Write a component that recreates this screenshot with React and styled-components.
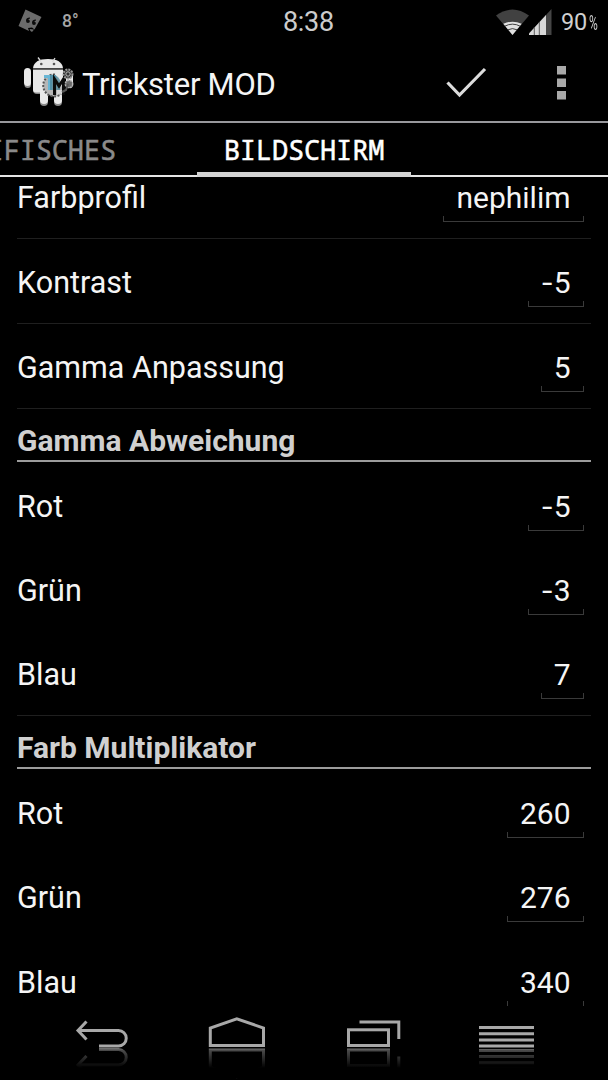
import styled, { createGlobalStyle } from "styled-components";

const Colors = {
  background: "#000000",
  text: "#f5f5f5",
  muted: "#d0d0d0",
  inactive: "#8a8a8a",
  icon: "#a8a8a8",
  divider: "#1f1f1f",
  bracket: "#3a3a3a",
};

const GlobalStyle = createGlobalStyle`
  body {
    margin: 0;
    background: ${Colors.background};
  }

  svg {
    display: block;
    flex: none;
  }
`;

const Screen = styled.div`
  display: flex;
  flex-direction: column;
  width: 608px;
  height: 1080px;
  overflow: hidden;
  background: ${Colors.background};
  color: ${Colors.text};
  font-family: Roboto, "Noto Sans", sans-serif;
`;

/* status bar */

const StatusBar = styled.header`
  display: grid;
  grid-template-columns: 283px 1fr 112px;
  height: 44px;
  flex: none;
`;

const Notifications = styled.div`
  display: flex;
  align-items: center;
  gap: 20px;
  padding-left: 18px;
  padding-bottom: 3px;
`;

const Temperature = styled.span`
  font-size: 17.5px;
  font-weight: 500;
  color: #a6a6a6;
`;

const Clock = styled.span`
  font-size: 27px;
  line-height: 44px;
  font-weight: 400;
  letter-spacing: -0.3px;
  color: #cccccc;
`;

const SystemIcons = styled.div`
  display: flex;
  align-items: center;
  color: #cfcfcf;
`;

const Battery = styled.span`
  margin-left: 8px;
  font-size: 23.5px;
  font-weight: 400;
  line-height: 44px;
  letter-spacing: -0.3px;
  white-space: nowrap;
`;

const Percent = styled.span`
  display: inline-block;
  margin-left: 2px;
  font-size: 20px;
  transform: scaleX(0.6);
  transform-origin: left center;
`;

/* action bar */

const ActionBar = styled.div`
  display: flex;
  align-items: center;
  height: 77px;
  flex: none;
  padding-left: 22px;
  border-bottom: 2px solid #98989c;
`;

const Title = styled.h1`
  flex: 1;
  margin: 4px 0 0 4px;
  font-size: 31px;
  font-weight: 400;
  line-height: 40px;
  letter-spacing: -0.25px;
`;

const ActionButton = styled.button`
  display: flex;
  justify-content: center;
  width: ${(props) => props.$width}px;
  padding: 0;
  border: 0;
  background: transparent;
`;

/* tabs */

const Tabs = styled.nav`
  display: flex;
  height: 52px;
  flex: none;
  border-bottom: 2px solid #e4e4e4;
`;

const Tab = styled.div`
  position: relative;
  display: flex;
  justify-content: ${(props) => (props.$active ? "center" : "flex-end")};
  width: ${(props) => props.$width}px;
  box-sizing: border-box;
  padding-right: ${(props) => (props.$active ? 0 : 81)}px;
  overflow: ${(props) => (props.$active ? "visible" : "hidden")};
  font-family: "Noto Sans Mono", "DejaVu Sans Mono", monospace;
  font-size: 27px;
  line-height: 53px;
  letter-spacing: -0.15px;
  color: ${(props) => (props.$active ? "#ffffff" : Colors.inactive)};
  -webkit-text-stroke: ${(props) =>
    props.$active ? "0.5px #ffffff" : `0.5px ${Colors.inactive}`};

  &::after {
    content: "";
    display: ${(props) => (props.$active ? "block" : "none")};
    position: absolute;
    left: 0;
    right: 0;
    bottom: -2px;
    height: 5px;
    background: #d4d4d4;
  }
`;

/* settings */

const Content = styled.main`
  display: flex;
  flex-direction: column;
  height: 829px;
  flex: none;
  overflow: hidden;
  padding: 0 17px;
`;

const Row = styled.div`
  display: flex;
  justify-content: space-between;
  align-items: flex-end;
  height: ${(props) => props.$height}px;
  flex: none;
  box-sizing: border-box;
  border-bottom: ${(props) =>
    props.$divided ? `1px solid ${Colors.divider}` : "0"};
`;

const Label = styled.span`
  margin-bottom: 21px;
  font-size: 30.5px;
  line-height: 38px;
  letter-spacing: 0;
`;

const Value = styled.span`
  position: relative;
  margin: 0 7px 16px 0;
  padding: 0 13.5px 7px 13px;
  font-size: 30px;
  line-height: 34px;

  &::after {
    content: "";
    position: absolute;
    left: 0;
    right: 0;
    bottom: 0;
    height: 5px;
    border: 1px solid ${Colors.bracket};
    border-top: 0;
  }
`;

const Sign = styled.span`
  display: inline-block;
  width: 13px;
  transform: translateX(1px) scaleX(1.25);
  transform-origin: left center;
`;

const SectionHeader = styled.h2`
  height: ${(props) => props.$height}px;
  flex: none;
  box-sizing: border-box;
  margin: 0;
  padding-top: 13px;
  border-bottom: 2px solid #9c9c9c;
  font-size: 30px;
  font-weight: 700;
  line-height: 38px;
  color: ${Colors.muted};
`;

/* navigation bar */

const NavBar = styled.footer`
  display: grid;
  grid-template-columns: repeat(4, 135px);
  justify-content: center;
  height: 74px;
  flex: none;
`;

const NavButton = styled.button`
  padding: 0;
  border: 0;
  background: transparent;
  color: ${Colors.icon};
`;

const rows = [
  { label: "Farbprofil", value: "nephilim", height: 62, divided: true },
  { label: "Kontrast", value: "-5", height: 85, divided: true },
  { label: "Gamma Anpassung", value: "5", height: 85, divided: true },
  { header: "Gamma Abweichung", height: 53 },
  { label: "Rot", value: "-5", height: 85 },
  { label: "Grün", value: "-3", height: 84 },
  { label: "Blau", value: "7", height: 85, divided: true },
  { header: "Farb Multiplikator", height: 53 },
  { label: "Rot", value: "260", height: 85 },
  { label: "Grün", value: "276", height: 84 },
  { label: "Blau", value: "340", height: 85 },
];

const NoteIcon = () => (
  <svg width="24" height="26" viewBox="18 8 24 26">
    <path d="M25.5 9.5 41.5 17 34.5 29.5 32 27.5 28 28 29 31 18.5 26Z" fill="#6b6b6b" />
    <path
      d="M30 17.5q-4 0-4 3.200q0 2.300 2 2.300q1.900 0 1.900-1.900q0-1.300-1.500-1.400q.2-.9 1.600-1.100zM36 19.500q-4 0-4 3.200q0 2.300 2 2.300q1.900 0 1.900-1.900q0-1.300-1.500-1.400q.2-.9 1.600-1.100z"
      fill="#0c0c0c"
    />
    <path d="M29.500 29l4.500.5-2 2.500-1.500-1z" fill="#6b6b6b" />
  </svg>
);

const WifiIcon = () => (
  <svg width="33" height="44" viewBox="496 0 33 44">
    <path d="M496 14.500Q512.500 2.500 529 14.500L512.500 34Z" fill="#414141" />
    <path d="M503.300 22.800Q512.500 18.500 521.700 22.800L512.500 34Z" fill="#e0e0e0" />
    <path
      d="M504.500 25.300q8-4.300 16 0M508 28.800q4.500-2.400 9 0"
      fill="none"
      stroke="#151515"
      strokeWidth="0.8"
    />
  </svg>
);

const SignalIcon = () => (
  <svg width="24" height="44" viewBox="528 0 24 44">
    <path d="M526.500 34 550.500 8V34Z" fill="#454545" />
    <path d="M526.500 34 545 14V34Z" fill="#d8d8d8" />
    <path d="M533.300 26v8M538.300 21v13" stroke="#5c5c5c" strokeWidth="1" />
  </svg>
);

const AppIcon = () => (
  <svg width="56" height="56" viewBox="22 56 56 56">
    <g fill="#8b8b8b">
      <rect x="24.500" y="72" width="6.500" height="17" rx="3.200" />
      <rect x="40" y="90" width="8" height="17" rx="4" />
      <rect x="54" y="90" width="8" height="17" rx="4" />
      <path d="M33 74h30v17q0 4-4 4H37q-4 0-4-4z" />
    </g>
    <g fill="#e9e9e9">
      <rect x="24" y="69" width="7" height="18" rx="3.500" />
      <rect x="66" y="74" width="7" height="15" rx="3.500" />
      <rect x="40" y="88" width="8" height="17" rx="4" />
      <rect x="54" y="88" width="8" height="17" rx="4" />
      <path d="M33 70.500h30v20q0 3-3 3H36q-3 0-3-3z" />
      <path d="M33 69.300q1-9.300 15-9.300t15 9.300z" />
    </g>
    <path d="m38 58.500 3 4M55 59l-2.500 4" stroke="#d8d8d8" strokeWidth="1.300" />
    <path d="M33 70h30" stroke="#555" strokeWidth="1" />
    <circle cx="41.300" cy="65" r="1.300" fill="#555" />
    <circle cx="54" cy="65" r="1.300" fill="#555" />
    <path d="M55 75.500a11 11 0 1 0 9 16" fill="#b6b6b6" stroke="#555" strokeWidth="2" strokeDasharray="2 1.500" />
    <path d="M44 76h12v3h-4v12h-4V79h-4z" fill="#69b6d5" />
    <path d="M50 76q7-1 10 5v10H50z" fill="#4b8196" opacity="0.75" />
    <path d="M54.500 96V80l4.500 7 4.500-7v16" fill="none" stroke="#0b0b0b" strokeWidth="3" />
    <path d="M57 91h5v5l-2-1.500-3 1.500z" fill="#d5d5d5" />
    <circle cx="68" cy="75" r="4.500" fill="#333" stroke="#999" strokeWidth="2" strokeDasharray="2 1" />
    <circle cx="68" cy="75" r="2.200" fill="none" stroke="#bbb" strokeWidth="1" />
    <circle cx="69" cy="85" r="3.700" fill="#6b6b6b" stroke="#b5b5b5" strokeWidth="1.500" strokeDasharray="2 1" />
    <path d="M62 93l4-2 2-6" fill="none" stroke="#555" strokeWidth="2" />
  </svg>
);

const CheckIcon = () => (
  <svg width="42" height="34" viewBox="445 66 42 34">
    <path d="M447.500 82.500 459.500 95 485 69" fill="none" stroke="#dcdcdc" strokeWidth="3.200" />
  </svg>
);

const OverflowIcon = () => (
  <svg width="9" height="34" viewBox="0 0 9 34" fill="#a9a9a9">
    <rect y="0" width="9" height="8.500" />
    <rect y="12.500" width="9" height="8.500" />
    <rect y="25" width="9" height="8.500" />
  </svg>
);

// every nav glyph stands on the same base line and fades out below it
const NavIcon = ({ name, children }) => (
  <svg width="135" height="74" viewBox="0 0 135 74" fill="none" stroke="currentColor" strokeWidth="3">
    <defs>
      <linearGradient id={`${name}-fade`} x1="0" y1="42" x2="0" y2="62" gradientUnits="userSpaceOnUse">
        <stop offset="0" stopColor="#fff" stopOpacity="0.5" />
        <stop offset="1" stopColor="#fff" stopOpacity="0" />
      </linearGradient>
      <mask id={`${name}-mask`} maskUnits="userSpaceOnUse" x="0" y="42" width="135" height="32">
        <rect x="0" y="42" width="135" height="32" fill={`url(#${name}-fade)`} />
      </mask>
    </defs>
    <g id={name}>{children}</g>
    <g mask={`url(#${name}-mask)`}>
      <use
        href={`#${name}`}
        transform={`translate(0 ${name === "menu" ? 84.5 : 83.5}) scale(1 -1)`}
      />
    </g>
  </svg>
);

const navItems = [
  {
    name: "back",
    glyph: (
      <>
        <path d="M44 24.500h40.500a7.750 7.750 0 0 1 0 15.500H65" />
        <path d="M52.500 15.500 44 24.500 52.500 33.500" />
      </>
    ),
  },
  {
    name: "home",
    glyph: <path d="M41.300 39.500V22L67.800 12.900 94.500 22V39.500Z" />,
  },
  {
    name: "recent",
    glyph: (
      <>
        <rect x="44.500" y="23.800" width="40" height="15.700" />
        <path d="M55.500 16h39.300V33" />
      </>
    ),
  },
  {
    name: "menu",
    glyph: <path d="M40 21.500H95M40 27.700H95M40 33.900H95M40 40H95" />,
  },
];

export default function App() {
  return (
    <>
      <GlobalStyle />
      <Screen>
        <StatusBar>
          <Notifications>
            <NoteIcon />
            <Temperature>8°</Temperature>
          </Notifications>
          <Clock>8:38</Clock>
          <SystemIcons>
            <WifiIcon />
            <SignalIcon />
            <Battery>
              90<Percent>%</Percent>
            </Battery>
          </SystemIcons>
        </StatusBar>

        <ActionBar>
          <AppIcon />
          <Title>Trickster MOD</Title>
          <ActionButton $width={96} aria-label="Anwenden">
            <CheckIcon />
          </ActionButton>
          <ActionButton $width={94} aria-label="Mehr">
            <OverflowIcon />
          </ActionButton>
        </ActionBar>

        <Tabs>
          <Tab $width={197}>IFISCHES</Tab>
          <Tab $width={214} $active>
            BILDSCHIRM
          </Tab>
        </Tabs>

        <Content>
          {rows.map((row, index) =>
            row.header ? (
              <SectionHeader key={index} $height={row.height}>
                {row.header}
              </SectionHeader>
            ) : (
              <Row key={index} $height={row.height} $divided={row.divided}>
                <Label>{row.label}</Label>
                <Value>
                  {row.value.startsWith("-") && <Sign>-</Sign>}
                  {row.value.replace("-", "")}
                </Value>
              </Row>
            )
          )}
        </Content>

        <NavBar>
          {navItems.map((item) => (
            <NavButton key={item.name} aria-label={item.name}>
              <NavIcon name={item.name}>{item.glyph}</NavIcon>
            </NavButton>
          ))}
        </NavBar>
      </Screen>
    </>
  );
}
